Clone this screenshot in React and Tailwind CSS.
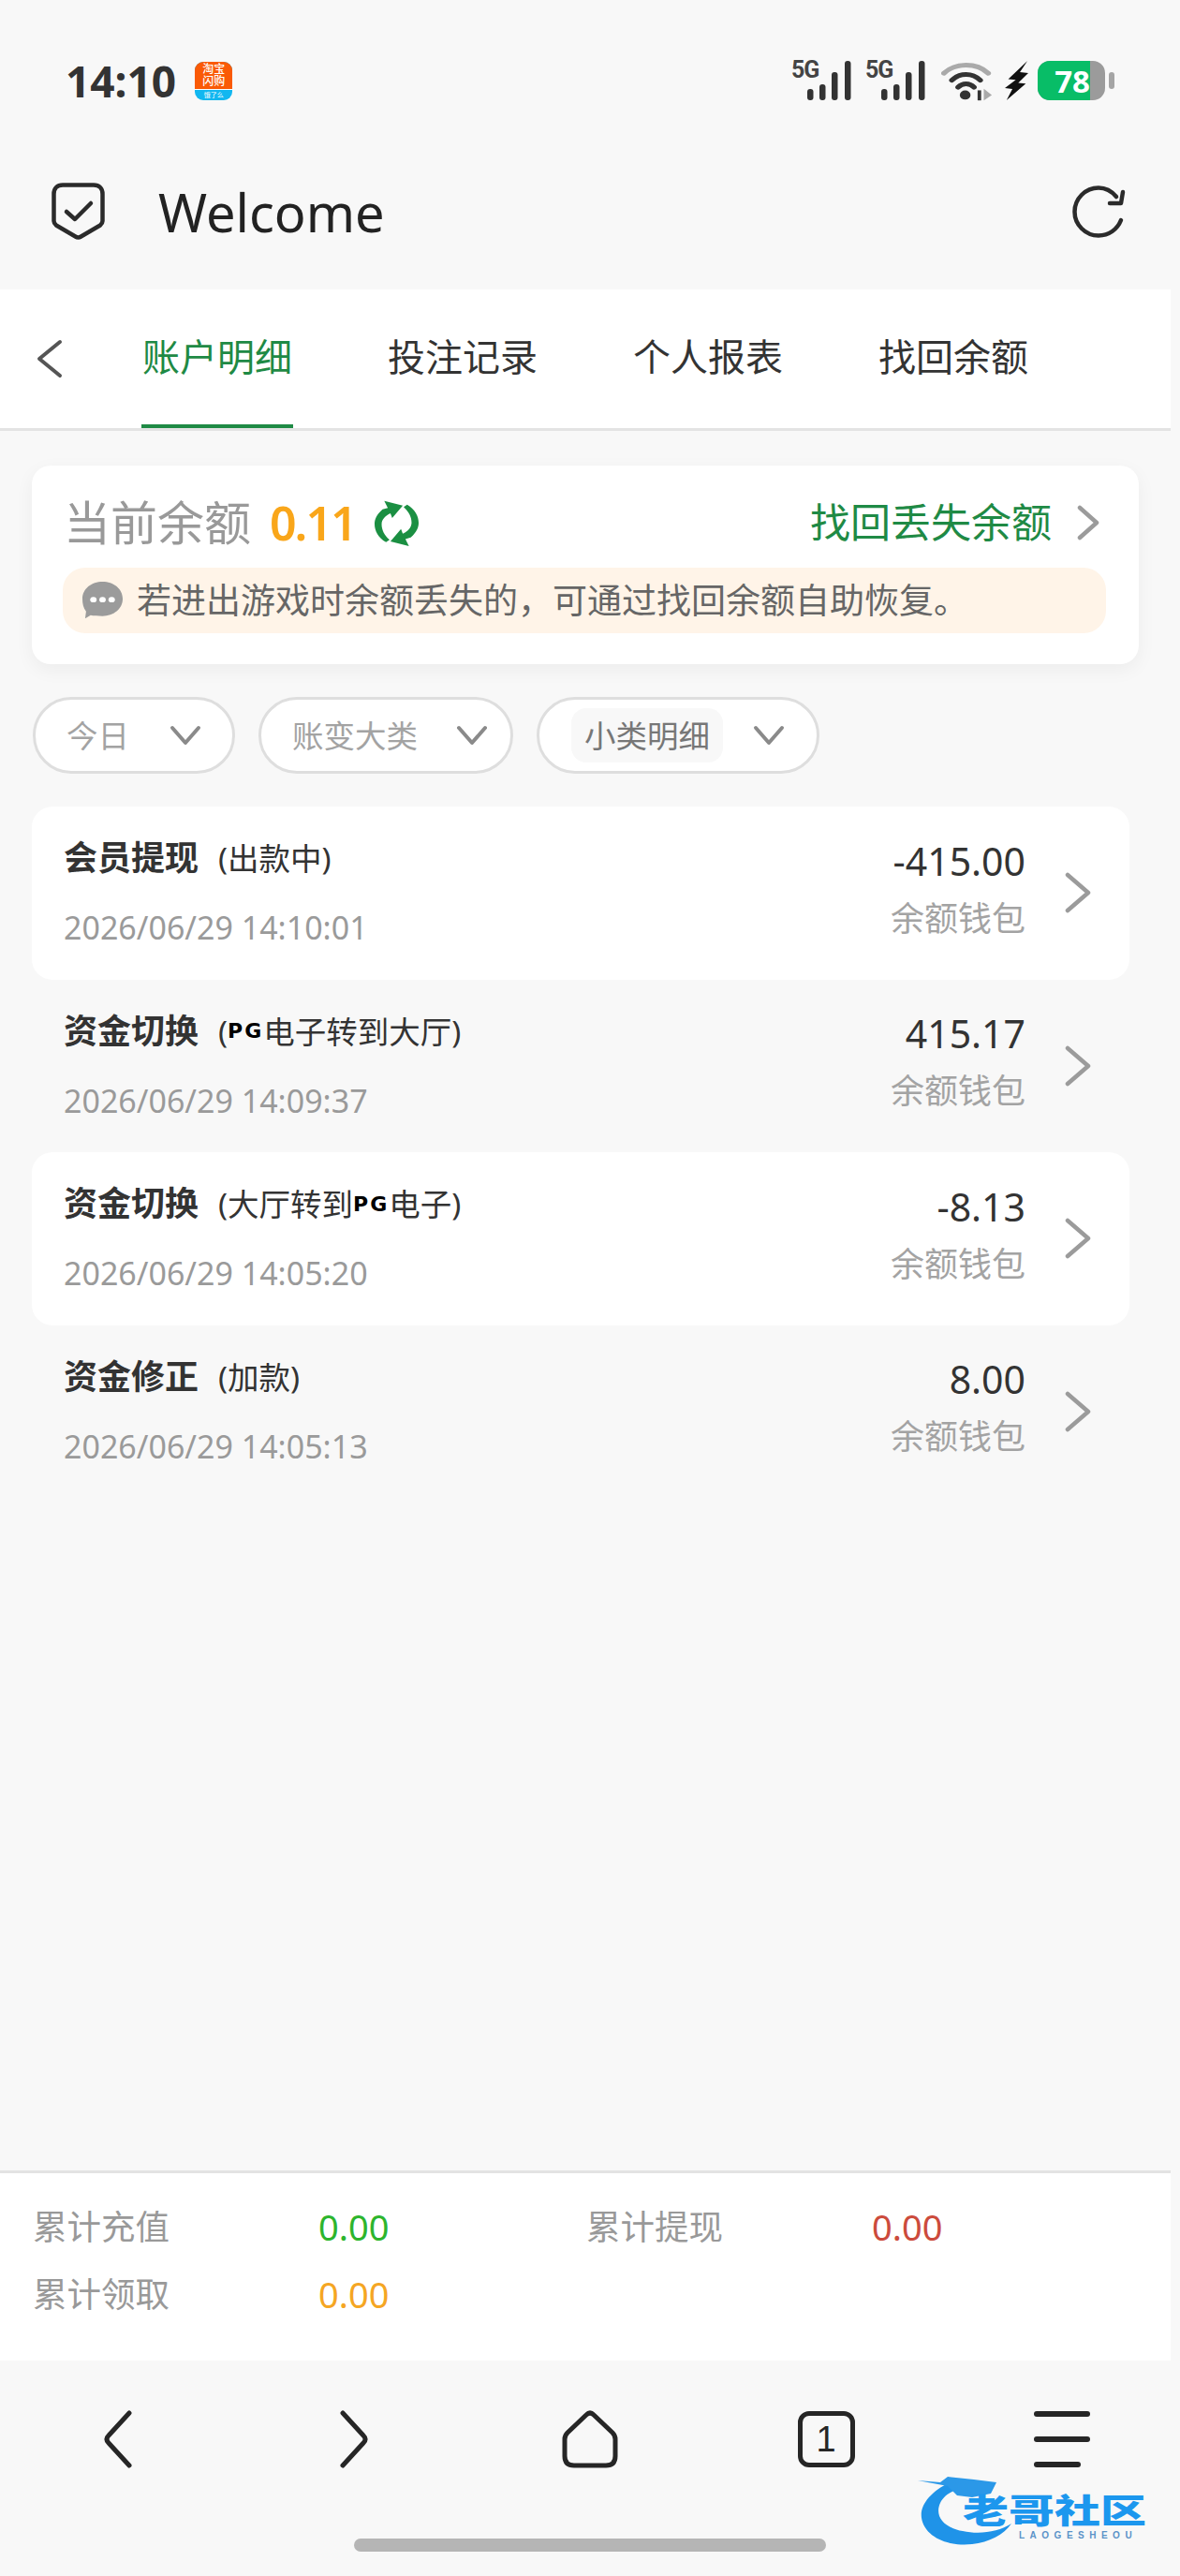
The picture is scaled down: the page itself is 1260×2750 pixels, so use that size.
const SANS = "[font-family:'Noto_Sans','Noto_Sans_CJK_SC',sans-serif]";

const TABS = ["账户明细", "投注记录", "个人报表", "找回余额"];

const ROWS = [
  { title: "会员提现", sub: ["(出款中)"], time: "2026/06/29 14:10:01", amount: "-415.00", white: true },
  { title: "资金切换", sub: ["(", "PG", "电子转到大厅)"], time: "2026/06/29 14:09:37", amount: "415.17" },
  { title: "资金切换", sub: ["(大厅转到", "PG", "电子)"], time: "2026/06/29 14:05:20", amount: "-8.13", white: true },
  { title: "资金修正", sub: ["(加款)"], time: "2026/06/29 14:05:13", amount: "8.00" },
];

function Chevron({ dir = "right", color = "#9b9b9b", w = 28, h = 44, sw = 4.5 }) {
  const d = dir === "right" ? `M3 3 L${w - 3} ${h / 2} L3 ${h - 3}` : `M${w - 3} 3 L3 ${h / 2} L${w - 3} ${h - 3}`;
  return (
    <svg width={w} height={h} viewBox={`0 0 ${w} ${h}`} fill="none" stroke={color} strokeWidth={sw} strokeLinecap="round" strokeLinejoin="round">
      <path d={d} />
    </svg>
  );
}

function Signal() {
  return (
    <div className="relative w-[65px] h-[42px]">
      <span className="absolute left-0 top-[-5px] text-[25px] leading-[30px] font-bold tracking-[-1px] text-[#444] [font-family:'Roboto',sans-serif]">5G</span>
      <svg className="absolute inset-0" width="65" height="42" viewBox="0 0 65 42" fill="#333">
        <rect x="17" y="30" width="6.5" height="12" rx="3" />
        <rect x="30" y="25" width="6.5" height="17" rx="3" />
        <rect x="43" y="12" width="6.5" height="30" rx="3" />
        <rect x="57" y="0" width="6.5" height="42" rx="3" />
      </svg>
    </div>
  );
}

function StatusIcons() {
  return (
    <div className="flex items-center">
      <Signal />
      <div className="w-[14px]" />
      <Signal />
      <svg className="ml-[16px]" width="55" height="43" viewBox="0 0 58 52" preserveAspectRatio="none" fill="none">
        <path d="M3 16 C16 2 40 2 53 16" stroke="#aaa" strokeWidth="6" strokeLinecap="round" />
        <path d="M12 25 C21 15 35 15 44 25" stroke="#333" strokeWidth="6" strokeLinecap="round" />
        <path d="M19 34 C24 28 32 28 37 34" stroke="#333" strokeWidth="6" strokeLinecap="round" />
        <circle cx="27" cy="44" r="6" fill="#333" />
        <path d="M43 38 v13" stroke="#333" strokeWidth="4" />
        <path d="M48 36 v15 l9 -7 z" fill="#aaa" />
      </svg>
      <svg className="ml-[13px]" width="25" height="42" viewBox="0 0 28 52" preserveAspectRatio="none" fill="#111">
        <path d="M27 0 L4 24 L13 25 L0 36 L9 37 L2 52 L25 30 L16 29 L28 16 L18 15 Z" />
      </svg>
      <div className="ml-[10px] w-[72px] h-[42px] overflow-hidden rounded-[13px] bg-[#9b9b9b] flex">
        <div className="w-[56px] h-full bg-[#08bd67] flex items-center justify-end text-white text-[33px] leading-none font-bold [font-family:'Open_Sans',sans-serif]">78</div>
      </div>
      <div className="ml-[4px] w-[6px] h-[18px] rounded-[3px] bg-[#a5a5a5]" />
    </div>
  );
}

function ShieldIcon() {
  return (
    <svg width="57" height="61" viewBox="0 0 57 61" fill="none" stroke="#2b2b2b" strokeLinejoin="round" strokeLinecap="round">
      <path d="M12 2.5 H45 C51 2.5 54.5 6 54.5 12 V41 C54.5 43 53.5 44 52 45.5 L31.5 57.5 C29.5 58.8 27.5 58.8 25.5 57.5 L5 45.5 C3.5 44 2.5 43 2.5 41 V12 C2.5 6 6 2.5 12 2.5 Z" strokeWidth="4.5" />
      <path d="M16 31 L25 39 L42 22" strokeWidth="4.5" />
    </svg>
  );
}

function ReloadIcon() {
  return (
    <svg width="57" height="56" viewBox="0 0 57 56" fill="none" stroke="#2b2b2b" strokeWidth="4.5" strokeLinecap="round" strokeLinejoin="round">
      <path d="M47 12 C42 6 35 2.5 28 2.5 C14 2.5 2.5 14 2.5 28 C2.5 42 14 53.5 28 53.5 C39 53.5 48 47 52 37" />
      <path d="M54 7 L52 19 L40 19" />
    </svg>
  );
}

// green two-arrow refresh next to the balance
function BalanceRefresh() {
  return (
    <svg width="47" height="50" viewBox="0 0 50 60" preserveAspectRatio="none" fill="#1b8f42">
      <path d="M9 11 C2 18 0 24 0 30 C0 38 4 47 13 53 L17 50 C11 44 8 37 8 30 C8 24 12 19 18 16 L20 22 L32 6 L11 0 L15 9 Z" transform="translate(0 2)" />
      <path d="M41 49 C48 42 50 36 50 30 C50 22 46 13 37 7 L33 10 C39 16 42 23 42 30 C42 36 38 41 32 44 L30 38 L18 54 L39 60 L35 51 Z" />
    </svg>
  );
}

function ChatDots() {
  return (
    <svg width="43" height="40" viewBox="0 0 44 48" preserveAspectRatio="none">
      <path d="M22 0 C34 0 44 9 44 22 C44 35 34 44 22 44 C17 44 12 44 9 43 L3 47 L4 38 C1 34 0 28 0 22 C0 9 10 0 22 0 Z" fill="#9b9b9b" />
      <circle cx="12" cy="23" r="3.5" fill="#fff" />
      <circle cx="22" cy="23" r="3.5" fill="#fff" />
      <circle cx="32" cy="23" r="3.5" fill="#fff" />
    </svg>
  );
}

function AppIcon() {
  return (
    <div className="ml-[20px] w-[40px] h-[41px] rounded-[9px] overflow-hidden flex flex-col bg-[#12b7f0]">
      <div className="h-[30px] bg-[#fa5a06] border-b-[1px] border-white flex flex-col items-center justify-center text-white text-[12px] leading-[13px] font-medium">
        <span>淘宝</span>
        <span>闪购</span>
      </div>
      <div className="flex-1 flex items-center justify-center text-white text-[7px] leading-none">饿了么</div>
    </div>
  );
}

function FilterArrow() {
  return (
    <svg width="34" height="22" viewBox="0 0 34 22" fill="none" stroke="#8a8a8a" strokeWidth="4" strokeLinecap="round" strokeLinejoin="round">
      <path d="M3 3 L17 19 L31 3" />
    </svg>
  );
}

function Row({ row }) {
  return (
    <div className={`h-[184.5px] rounded-[22px] flex items-center pl-[34px] pr-[41px] ${row.white ? "bg-white" : ""}`}>
      <div className="flex-1">
        <div className="flex items-center h-[44px]">
          <span className="text-[36px] font-bold text-[#333] w-[165px]">{row.title}</span>
          <span className="text-[33.5px] text-[#333] flex items-center">
            {row.sub.map((s, i) =>
              s === "PG" ? (
                <span key={i} className="text-[22px] font-bold tracking-[2px] text-black [font-family:'DejaVu_Sans',sans-serif]">PG</span>
              ) : (
                <span key={i}>{s}</span>
              )
            )}
          </span>
        </div>
        <div className="mt-[30px] text-[34px] leading-[44px] text-[#9a9a9a]">{row.time}</div>
      </div>
      <div className="text-right mr-[42px] mb-[10px]">
        <div className="text-[41px] leading-[50px] text-[#333]">{row.amount}</div>
        <div className="mt-[15px] text-[36px] leading-[44px] text-[#a3a3a3]">余额钱包</div>
      </div>
      <Chevron />
    </div>
  );
}

function Stat({ label, value, color }) {
  return (
    <div className="flex items-center h-[72px]">
      <span className="w-[305px] text-[36.5px] text-[#999]">{label}</span>
      <span className={`text-[38px] ${color}`}>{value}</span>
    </div>
  );
}

function NavBar() {
  const stroke = { fill: "none", stroke: "#262626", strokeWidth: 5, strokeLinecap: "round", strokeLinejoin: "round" };
  return (
    <div className="grid grid-cols-5 w-[1260px] h-[60px] mt-[53px] place-items-center">
      <svg width="34" height="62" viewBox="0 0 34 62" {...stroke}>
        <path d="M29 3 L7 27 Q3 31 7 35 L29 59" />
      </svg>
      <svg width="34" height="62" viewBox="0 0 34 62" {...stroke}>
        <path d="M5 3 L27 27 Q31 31 27 35 L5 59" />
      </svg>
      <svg width="60" height="62" viewBox="0 0 60 62" {...stroke}>
        <path d="M26 5 Q30 1 34 5 L54 24 Q57 27 57 31 V49 Q57 59 47 59 H13 Q3 59 3 49 V31 Q3 27 6 24 Z" />
      </svg>
      <div className="w-[61px] h-[60px] rounded-[12px] border-[5px] border-[#262626] flex items-center justify-center text-[38px] leading-none text-[#262626] [font-family:'Liberation_Sans',sans-serif]">1</div>
      <svg width="60" height="60" viewBox="0 0 60 60" fill="#262626">
        <rect x="0" y="0" width="60" height="6" rx="3" />
        <rect x="0" y="27" width="60" height="6" rx="3" />
        <rect x="0" y="54" width="50" height="6" rx="3" />
      </svg>
    </div>
  );
}

function Watermark() {
  return (
    <div className="absolute left-[980px] top-[2638px] w-[260px] h-[80px]">
      <svg className="absolute inset-0" width="110" height="80" viewBox="0 0 110 80" fill="none">
        <path d="M34 12 C14 22 2 36 4 50 C7 70 32 81 58 78 C76 76 92 68 100 56 C86 65 66 68 48 64 C26 60 18 47 24 34 C28 26 35 22 46 18 Z" fill="#1f93e8" />
        <path d="M0 10 L24 12 L32 6 L60 9 L84 12 L78 24 L58 28 L42 26 L32 16 Z" fill="#2b98e8" />
      </svg>
      <span className="absolute left-[48px] top-[24px] origin-left scale-x-[1.36] text-[36px] leading-[38px] font-black text-[#1c97ee] whitespace-nowrap">老哥社区</span>
      <span className="absolute left-[108px] top-[64px] text-[10px] leading-[10px] font-bold text-[#5b93c8] tracking-[5.5px] [font-family:'Liberation_Sans',sans-serif]">LAOGESHEOU</span>
    </div>
  );
}

export default function App() {
  return (
    <div className={`relative w-[1260px] h-[2750px] overflow-hidden bg-[#f8f8f8] flex flex-col ${SANS}`}>
      {/* status bar */}
      <div className="h-[172px] shrink-0 flex items-center justify-between pl-[70px] pr-[70px]">
        <div className="flex items-center">
          <span className="text-[46px] font-bold text-[#333]">14:10</span>
          <AppIcon />
        </div>
        <StatusIcons />
      </div>

      {/* header */}
      <div className="h-[137px] shrink-0 flex items-center pl-[55px] pr-[58px] pb-[30px]">
        <ShieldIcon />
        <span className="ml-[57px] text-[56px] text-[#222] flex-1">Welcome</span>
        <ReloadIcon />
      </div>

      {/* tabs */}
      <div className="w-[1250px] h-[151px] shrink-0 bg-white border-b-[3px] border-[#e3e3e3] flex items-stretch">
        <div className="w-[101px] flex items-center pl-[39px]">
          <Chevron dir="left" color="#555" h={42} sw={4} />
        </div>
        {TABS.map((t, i) => (
          <div key={t} className="w-[262px] flex justify-center">
            <span className={`h-full flex items-center px-[1px] text-[40px] border-b-[4px] ${i === 0 ? "border-[#1f8a45] text-[#1f8a45]" : "border-transparent text-[#333]"}`}>{t}</span>
          </div>
        ))}
      </div>

      {/* balance card */}
      <div className="ml-[34px] mt-[37px] w-[1182px] h-[212px] shrink-0 rounded-[20px] bg-white shadow-[0_6px_20px_rgba(0,0,0,0.05)] pt-[31px]">
        <div className="h-[60px] flex items-center pl-[34px] pr-[42px]">
          <span className="text-[50px] text-[#999]">当前余额</span>
          <span className="ml-[20px] text-[50px] font-semibold tracking-[-2px] text-[#f9a61a]">0.11</span>
          <div className="ml-[20px] flex-1">
            <BalanceRefresh />
          </div>
          <span className="text-[43px] text-[#1f8a45]">找回丢失余额</span>
          <div className="ml-[27px]">
            <Chevron w={24} h={38} />
          </div>
        </div>
        <div className="ml-[33px] mt-[18px] w-[1114px] h-[70px] rounded-[24px] bg-[#fff4e8] flex items-center pl-[21px]">
          <ChatDots />
          <span className="ml-[15px] text-[37px] text-[#666]">若进出游戏时余额丢失的，可通过找回余额自助恢复。</span>
        </div>
      </div>

      {/* filters */}
      <div className="ml-[35px] mt-[35px] flex gap-[25px] shrink-0">
        <div className="w-[216px] h-[82px] rounded-full border-[3px] border-[#dedede] bg-white flex items-center justify-between pl-[33px] pr-[33px]">
          <span className="text-[33.5px] text-[#a3a3a3]">今日</span>
          <FilterArrow />
        </div>
        <div className="w-[272px] h-[82px] rounded-full border-[3px] border-[#dedede] bg-white flex items-center justify-between pl-[33px] pr-[24px]">
          <span className="text-[33.5px] text-[#a3a3a3]">账变大类</span>
          <FilterArrow />
        </div>
        <div className="w-[302px] h-[82px] rounded-full border-[3px] border-[#dedede] bg-white flex items-center justify-between pl-[34px] pr-[34px]">
          <span className="rounded-[16px] bg-[#f8f8f8] px-[14px] h-[58px] flex items-center text-[33.5px] text-[#777]">小类明细</span>
          <FilterArrow />
        </div>
      </div>

      {/* records */}
      <div className="ml-[34px] mt-[35px] w-[1172px] shrink-0">
        {ROWS.map((row, i) => (
          <Row key={i} row={row} />
        ))}
      </div>

      <div className="flex-1" />

      {/* totals */}
      <div className="w-[1250px] h-[203px] shrink-0 bg-white border-t-[3px] border-[#e3e3e3] pl-[35px] pt-[21px]">
        <div className="grid grid-cols-2 w-[1182px]">
          <Stat label="累计充值" value="0.00" color="text-[#2db52d]" />
          <Stat label="累计提现" value="0.00" color="text-[#cc4b3c]" />
          <Stat label="累计领取" value="0.00" color="text-[#f5a623]" />
        </div>
      </div>

      {/* browser nav */}
      <div className="h-[230px] shrink-0">
        <NavBar />
        <div className="mx-auto mt-[77px] w-[504px] h-[14px] rounded-full bg-[#b5b5b5]" />
      </div>

      <Watermark />
    </div>
  );
}
